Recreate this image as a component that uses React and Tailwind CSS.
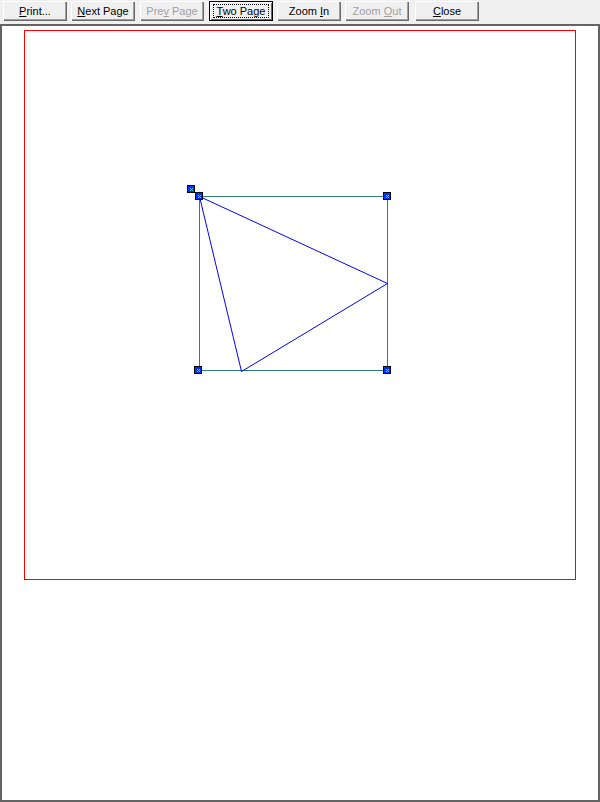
import React from 'react';

const buttons = [
  { pre: '', key: 'P', post: 'rint...', ml: 'ml-[3px]' },
  { pre: '', key: 'N', post: 'ext Page', ml: 'ml-[4px]' },
  { pre: 'Pre', key: 'v', post: ' Page', ml: 'ml-[5px]', disabled: true },
  { pre: '', key: 'T', post: 'wo Page', ml: 'ml-[5px]', focused: true },
  { pre: 'Zoom ', key: 'I', post: 'n', ml: 'ml-[4px]' },
  { pre: 'Zoom ', key: 'O', post: 'ut', ml: 'ml-[4px]', disabled: true },
  { pre: '', key: 'C', post: 'lose', ml: 'ml-[6px]' },
];

function ToolButton({ b }) {
  const frame = b.focused
    ? 'border border-black shadow-[inset_1px_1px_0_#ffffff,inset_-1px_-1px_0_#696969]'
    : 'shadow-[inset_1px_1px_0_#ffffff,inset_-1px_-1px_0_#696969,inset_-2px_-2px_0_#a0a0a0]';
  return (
    <div className={`${b.ml} flex h-[20px] w-[64px] items-center justify-center bg-[#f0f0f0] ${frame}`}>
      <div
        className={`flex items-center justify-center leading-[13px] ${
          b.focused ? 'h-[14px] w-[56px] border border-dotted border-black' : ''
        } ${b.disabled ? 'text-[#a0a0a0]' : 'text-black'}`}
      >
        <span>
          {b.pre}
          <span className="underline underline-offset-1">{b.key}</span>
          {b.post}
        </span>
      </div>
    </div>
  );
}

function Handle({ x, y }) {
  return (
    <g>
      <rect x={x - 3.5} y={y - 3.5} width="7" height="7" fill="#0033ff" stroke="#000" strokeWidth="1" />
      <rect x={x - 1} y={y - 1} width="1" height="1" fill="#66ccff" />
      <rect x={x + 1} y={y - 1} width="1" height="1" fill="#66ccff" />
      <rect x={x} y={y} width="1" height="1" fill="#66ccff" />
      <rect x={x - 1} y={y + 1} width="1" height="1" fill="#66ccff" />
      <rect x={x + 1} y={y + 1} width="1" height="1" fill="#66ccff" />
    </g>
  );
}

export default function App() {
  return (
    <div
      className="flex h-[802px] w-[600px] flex-col bg-[#f0f0f0] text-[11px]"
      style={{ fontFamily: '"Liberation Sans", Arial, sans-serif' }}
    >
      <div className="flex h-[24px] items-start pt-[1px]">
        {buttons.map((b) => (
          <ToolButton key={b.key + b.post} b={b} />
        ))}
      </div>
      <div className="relative flex-1 border-2 border-[#646464] bg-white">
        <svg className="absolute inset-0 h-full w-full" viewBox="2 26 596 774" shapeRendering="crispEdges">
          <rect x="24.5" y="30.5" width="551" height="549" fill="none" stroke="#ff0000" strokeWidth="1" />
          <rect x="199.5" y="196.5" width="188" height="174" fill="none" stroke="#2f7f7f" strokeWidth="1" />
          <polygon
            points="199.5,196.5 387.5,283.5 241.5,371.5"
            fill="none"
            stroke="#0000ff"
            strokeWidth="1"
            shapeRendering="auto"
          />
          <Handle x={191} y={189} />
          <Handle x={199} y={196} />
          <Handle x={387} y={196} />
          <Handle x={198} y={370} />
          <Handle x={387} y={370} />
        </svg>
      </div>
    </div>
  );
}
